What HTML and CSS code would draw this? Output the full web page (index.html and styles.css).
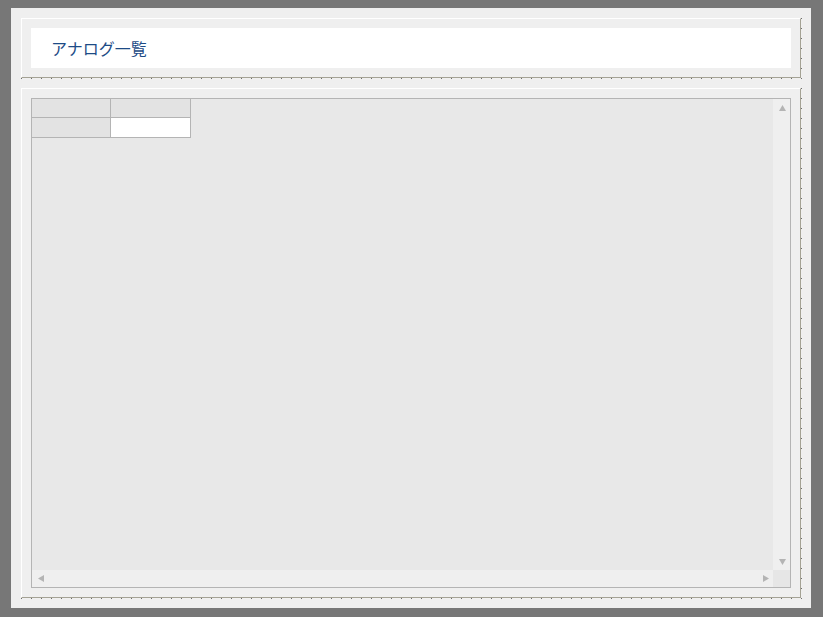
FILE: index.html
```html
<!DOCTYPE html>
<html lang="ja">
  <head>
    <meta charset="UTF-8" />
    <meta name="viewport" content="width=device-width, initial-scale=1.0" />
    <title>アナログ一覧</title>
    <link rel="stylesheet" href="styles.css">
  </head>
  <body>
    <div class="window">
      <div class="panel title-panel">
        <div class="title-box">アナログ一覧</div>
      </div>
      <div class="panel grid-panel">
        <div class="grid">
          <div class="grid-view">
            <div class="cell-row">
              <div class="cell head"></div>
              <div class="cell head"></div>
            </div>
            <div class="cell-row tall">
              <div class="cell head"></div>
              <div class="cell data"></div>
            </div>
          </div>
          <div class="vscroll">
            <svg class="arrow" width="7" height="6" viewBox="0 0 7 6"><polygon points="3.5,0 7,6 0,6" /></svg>
            <svg class="arrow" width="7" height="6" viewBox="0 0 7 6"><polygon points="0,0 7,0 3.5,6" /></svg>
          </div>
          <div class="hscroll">
            <svg class="arrow" width="6" height="7" viewBox="0 0 6 7"><polygon points="0,3.5 6,0 6,7" /></svg>
            <svg class="arrow" width="6" height="7" viewBox="0 0 6 7"><polygon points="0,0 6,3.5 0,7" /></svg>
          </div>
          <div class="corner"></div>
        </div>
      </div>
    </div>
  </body>
</html>
```

FILE: styles.css
```css
html,
body {
  margin: 0;
  height: 100%;
}
body {
  background-color: #777;
  font-family: "Noto Sans CJK JP", "Noto Sans", sans-serif;
  overflow: hidden;
}
.window {
  margin: 8px 0 0 11px;
  width: 780px;
  height: 580px;
  padding: 10px;
  background-color: #efefef;
  display: flex;
  flex-direction: column;
  gap: 10px;
}
.panel {
  position: relative;
  padding: 9px;
  border-top: 1px solid #fff;
  border-left: 1px solid #fff;
  border-right: 1px solid #a4a294;
  border-bottom: 1px solid #a4a294;
}
.panel::after {
  content: "";
  position: absolute;
  left: -1px;
  right: -2px;
  bottom: -2px;
  height: 1px;
  background: repeating-linear-gradient(to right, #6e6e6e 0 1px, transparent 1px 10px);
}
.panel::before {
  content: "";
  position: absolute;
  top: -1px;
  bottom: -1px;
  right: -2px;
  width: 1px;
  background: repeating-linear-gradient(to bottom, #6e6e6e 0 1px, transparent 1px 10px);
}
.title-panel {
  height: 40px;
}
.title-box {
  height: 40px;
  background-color: #fff;
  padding-left: 20px;
  line-height: 40px;
  font-size: 16px;
  color: #1d4b86;
}
.grid-panel {
  height: 490px;
}
.grid {
  height: 488px;
  border: 1px solid #b4b4b4;
  background-color: #e8e8e8;
  display: grid;
  grid-template-columns: 1fr 17px;
  grid-template-rows: 1fr 17px;
}
.grid-view {
  display: flex;
  flex-direction: column;
}
.cell-row {
  display: flex;
  height: 19px;
}
.cell-row.tall {
  height: 20px;
}
.cell {
  border-right: 1px solid #b4b4b4;
  border-bottom: 1px solid #b4b4b4;
}
.cell:first-child {
  width: 78px;
}
.cell:last-child {
  width: 79px;
}
.head {
  background-color: #e3e3e3;
}
.data {
  background-color: #fff;
}
.vscroll {
  background-color: #efefef;
  display: flex;
  flex-direction: column;
  justify-content: space-between;
  align-items: center;
  padding: 6px 0 5px 1px;
}
.hscroll {
  background-color: #efefef;
  display: flex;
  justify-content: space-between;
  align-items: center;
  padding: 0 4px 0 6px;
}
.corner {
  background-color: #e6e6e6;
}
.arrow {
  fill: #b4b4b4;
  display: block;
}
```
